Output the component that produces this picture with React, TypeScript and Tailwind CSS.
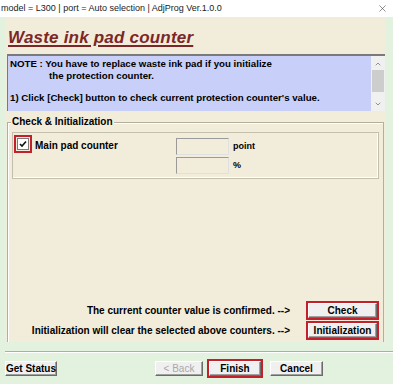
import React from 'react';
import { X, ChevronUp, ChevronDown } from 'lucide-react';

const sans = { fontFamily: '"Liberation Sans", Arial, sans-serif' };

const Btn: React.FC<{ label: string; w: string; disabled?: boolean }> = ({ label, w, disabled }) => (
  <div
    className={`${w} h-[15px] flex items-center justify-center bg-[#f0f0f0] border border-t-white border-l-white border-r-[#6b6b6b] border-b-[#6b6b6b] shadow-[inset_-1px_-1px_0_#a0a0a0] text-[10px] font-bold ${disabled ? 'text-[#a8a8a8] font-normal' : 'text-black'}`}
  >
    {label}
  </div>
);

const RedBtn: React.FC<{ label: string; w: string }> = ({ label, w }) => (
  <div className="border-2 border-[#c4202c]">
    <Btn label={label} w={w} />
  </div>
);

export default function App() {
  return (
    <div className="w-[393px] h-[384px] flex flex-col bg-[#e3f1df] overflow-hidden" style={sans}>
      {/* window title bar */}
      <div className="h-[17px] bg-white flex items-center justify-between pl-px pr-[5px]">
        <span className="text-[9px] text-[#222]">model = L300 | port = Auto selection | AdjProg Ver.1.0.0</span>
        <X size={11} strokeWidth={1.2} className="text-[#333]" />
      </div>

      <div className="flex-1 flex flex-col pt-px">
        {/* beige panel */}
        <div className="ml-[5px] mr-[8px] h-[324px] bg-[#f2ecda] flex flex-col pl-[2px]">
          <div className="pt-[7px] pl-[1px] h-[36px]">
            <span className="text-[17px] font-bold italic text-[#7b2727] underline decoration-2 underline-offset-2 tracking-[0.2px]">
              Waste ink pad counter
            </span>
          </div>

          {/* note box */}
          <div className="h-[57px] flex bg-[#c8cff8] border-t-2 border-l border-[#7a7a7a]">
            <div className="flex-1 pl-[2px] pt-[2px] text-[9.7px] font-bold text-black leading-[12px]">
              <div>NOTE : You have to replace waste ink pad if you initialize</div>
              <div className="pl-[39px]">the protection counter.</div>
              <div className="h-[10px]" />
              <div>1) Click [Check] button to check current protection counter's value.</div>
            </div>
            <div className="w-[14px] bg-[#f0f0f0] flex flex-col items-center">
              <ChevronUp size={8} strokeWidth={2} className="text-[#606060] mt-[4px]" />
              <div className="w-[12px] h-[22px] bg-[#cdcdcd] mt-[2px]" />
              <div className="flex-1" />
              <ChevronDown size={8} strokeWidth={2} className="text-[#606060] mb-[3px]" />
            </div>
          </div>

          {/* group box */}
          <div className="relative mt-[11px] mr-[1px] flex-1 border border-b-0 border-[#b3ae9e] shadow-[inset_1px_1px_0_#ffffff] px-[4px] pt-[9px] pb-[2px] flex flex-col">
            <span className="absolute -top-[7px] left-[3px] bg-[#f2ecda] px-[1px] text-[10px] font-bold text-black leading-[12px]">
              Check &amp; Initialization
            </span>
            <div className="h-[47px] border border-[#c4bfad] shadow-[inset_-1px_-1px_0_#ffffff] flex">
              <div className="pl-[1px] pt-[2px]">
                <div className="w-[18px] h-[18px] border-2 border-[#c4202c] flex items-center justify-center">
                  <div className="w-[12px] h-[12px] bg-white border border-[#7a7a7a] flex items-center justify-center">
                    <svg width="8" height="8" viewBox="0 0 8 8">
                      <path d="M1 4 L3 6 L7 1.5" fill="none" stroke="#111" strokeWidth="1.6" />
                    </svg>
                  </div>
                </div>
              </div>
              <div className="pl-[3px] pt-[5px] w-[144px] text-[10px] font-bold">Main pad counter</div>
              <div className="flex flex-col gap-[2px] pt-[5px]">
                <div className="flex items-center gap-[4px]">
                  <div className="w-[53px] h-[17px] border border-[#9a9a9a] border-r-[#e0e0e0] border-b-[#e0e0e0] bg-[#f2ecda]" />
                  <span className="text-[9px] font-bold">point</span>
                </div>
                <div className="flex items-center gap-[4px]">
                  <div className="w-[53px] h-[17px] border border-[#9a9a9a] border-r-[#e0e0e0] border-b-[#e0e0e0] bg-[#f2ecda]" />
                  <span className="text-[9px] font-bold">%</span>
                </div>
              </div>
            </div>
            <div className="flex-1" />
            <div className="flex flex-col gap-[1px] text-[10px] font-bold">
              <div className="flex items-center justify-end gap-[16px]">
                <span>The current counter value is confirmed. --&gt;</span>
                <RedBtn label="Check" w="w-[69px]" />
              </div>
              <div className="flex items-center justify-end gap-[16px]">
                <span>Initialization will clear the selected above counters. --&gt;</span>
                <RedBtn label="Initialization" w="w-[69px]" />
              </div>
            </div>
          </div>
        </div>

        {/* separator */}
        <div className="mt-[9px] ml-[5px] h-[2px] border-t border-[#a8b0a4] border-b border-b-white" />

        {/* bottom buttons */}
        <div className="flex items-center pl-[5px] mt-[6px]">
          <Btn label="Get Status" w="w-[52px]" />
          <div className="ml-[98px]">
            <Btn label="< Back" w="w-[48px]" disabled />
          </div>
          <div className="ml-[4px] border-2 border-[#c4202c]">
            <Btn label="Finish" w="w-[52px]" />
          </div>
          <div className="ml-[7px]">
            <Btn label="Cancel" w="w-[53px]" />
          </div>
        </div>
      </div>
    </div>
  );
}
